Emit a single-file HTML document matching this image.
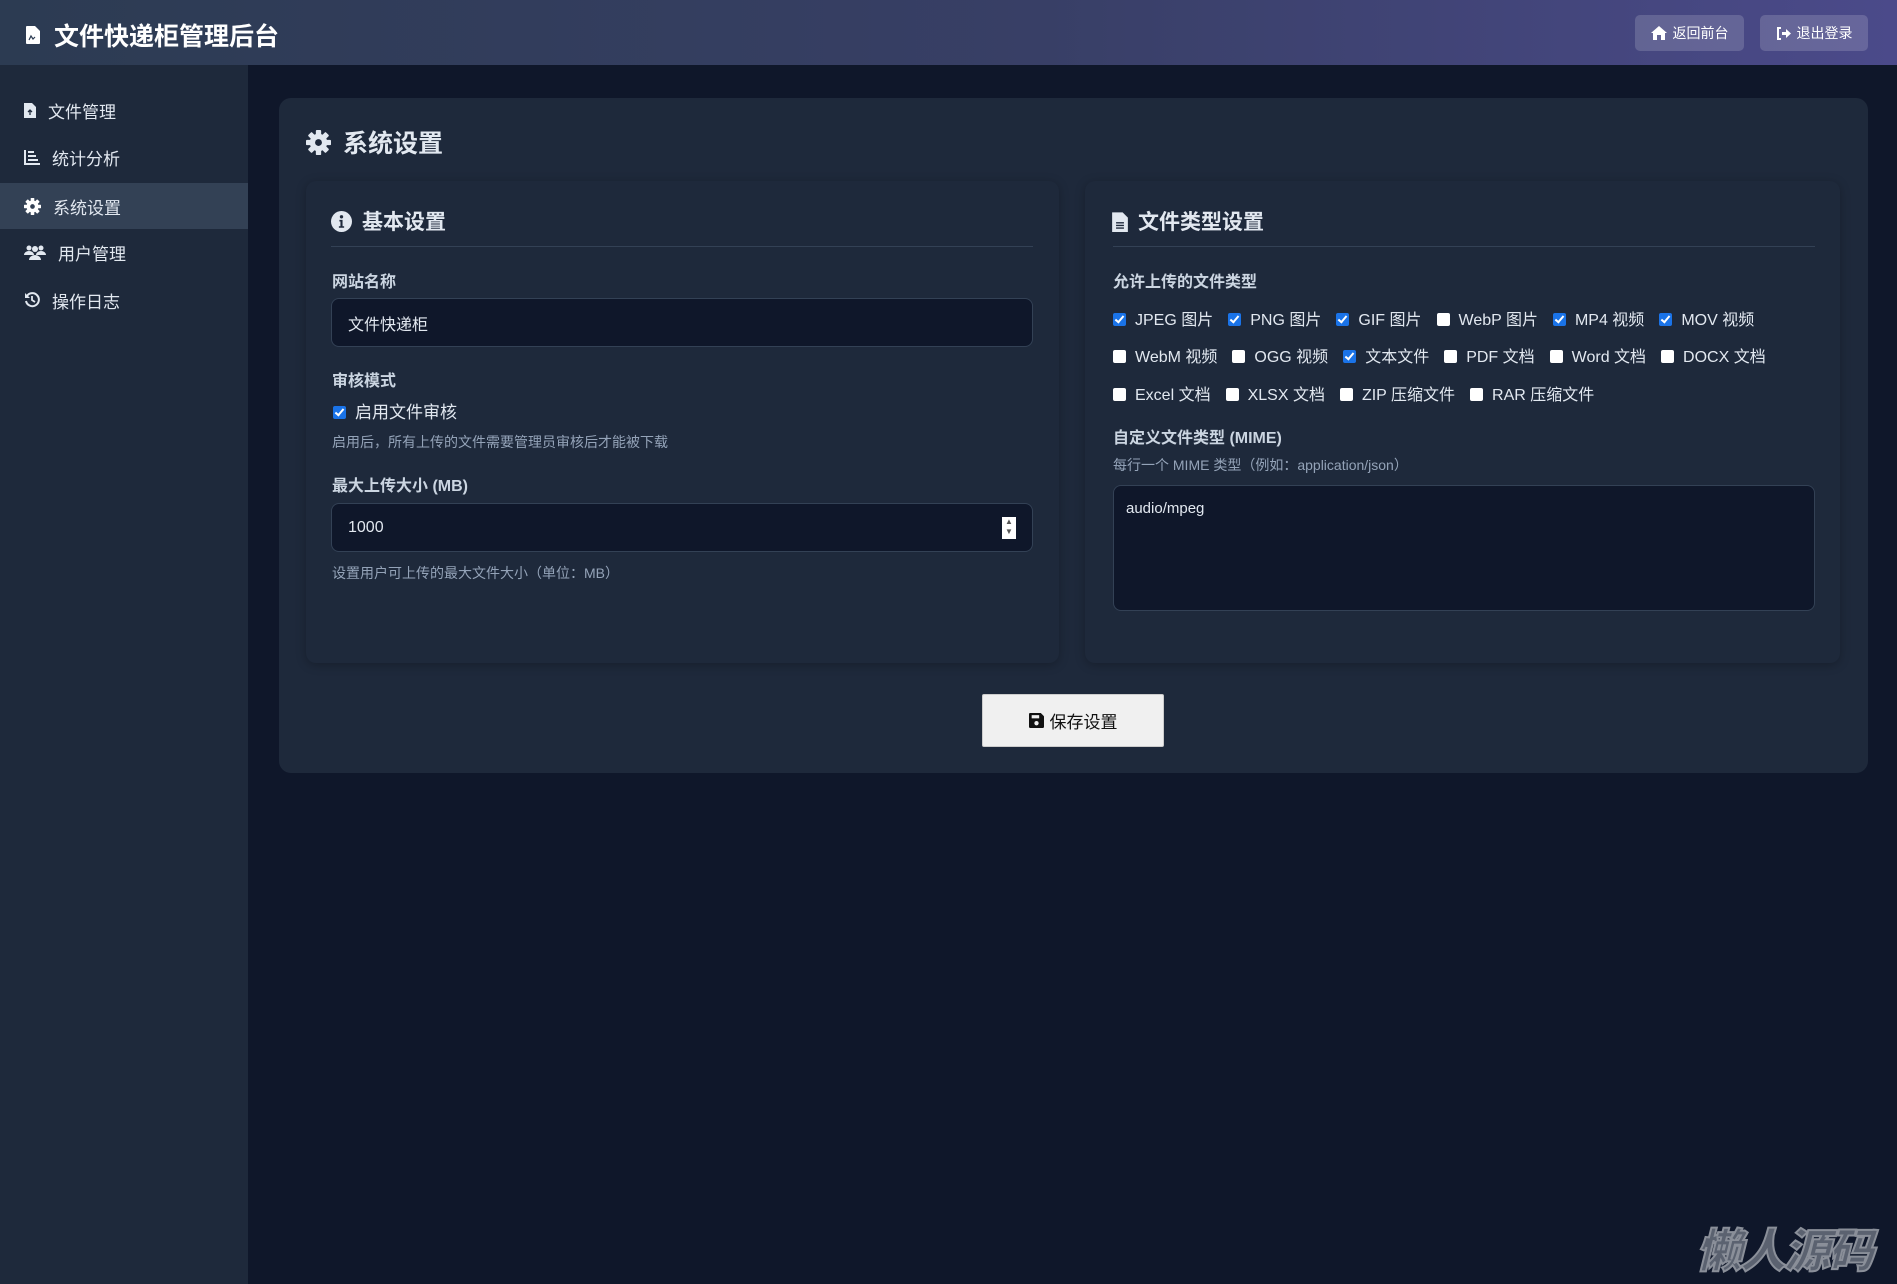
<!DOCTYPE html>
<html><head><meta charset="utf-8"><style>
*{box-sizing:border-box;margin:0;padding:0}
body{width:1897px;height:1284px;background:#0f172a;font-family:"Liberation Sans","Noto Sans CJK SC",sans-serif;color:#e2e8f0;position:relative;overflow:hidden}
.hdr{position:absolute;left:0;top:0;width:1897px;height:65px;background:linear-gradient(90deg,#2c3b52 0%,#383f66 55%,#4b4a8a 100%)}
.hdr h1{position:absolute;left:26px;top:17px;font-size:25px;font-weight:bold;color:#fff;display:flex;align-items:center;gap:14px}
.hb{position:absolute;top:15px;height:36px;background:rgba(255,255,255,.16);border-radius:5px;color:#fff;font-size:14px;display:flex;align-items:center;justify-content:center;gap:6px}
.side{position:absolute;left:0;top:65px;width:248px;height:1219px;background:#1e293b}
.it{position:absolute;left:0;width:248px;height:46px;display:flex;align-items:center;padding-left:24px;font-size:17px;color:#e2e8f0;gap:12px}
.it.act{background:#334155}
.card{position:absolute;left:279px;top:98px;width:1589px;height:675px;background:#1e293b;border-radius:12px}
.ttl{position:absolute;left:306px;top:124px;font-size:25px;font-weight:bold;display:flex;align-items:center;gap:12px;color:#e2e8f0}
.pn{position:absolute;top:181px;height:482px;background:#1e293b;border-radius:10px;box-shadow:0 2px 10px rgba(0,0,0,.25)}
.sub{position:absolute;font-size:21px;font-weight:bold;display:flex;align-items:center;gap:10px;color:#e2e8f0}
.hr{position:absolute;height:1px;background:#334155}
.lb{position:absolute;font-size:16px;font-weight:bold;color:#cbd5e1}
.in{position:absolute;background:#0f172a;border:1px solid #334155;border-radius:8px;font-size:16px;color:#e2e8f0;padding-left:16px;display:flex;align-items:center}
.hint{position:absolute;font-size:14px;color:#94a3b8}
.cb{display:inline-block;width:13px;height:13px;border-radius:2px;background:#fff;vertical-align:-1px;margin-right:9px;position:relative}
.cb.on{background:#1a73e8}
.cb.on::after{content:"";position:absolute;left:4px;top:1px;width:3px;height:7px;border:solid #fff;border-width:0 2px 2px 0;transform:rotate(40deg)}
.row{position:absolute;left:1113px;font-size:16px;color:#e2e8f0;white-space:nowrap}
.row span.g{margin-right:15px}
</style></head><body>
<svg width="0" height="0" style="position:absolute"><defs><g id="gear"><g fill="currentColor"><rect x="6.3" y="0" width="3.4" height="16" rx=".6"/><rect x="6.3" y="0" width="3.4" height="16" rx=".6" transform="rotate(45 8 8)"/><rect x="6.3" y="0" width="3.4" height="16" rx=".6" transform="rotate(90 8 8)"/><rect x="6.3" y="0" width="3.4" height="16" rx=".6" transform="rotate(135 8 8)"/><circle cx="8" cy="8" r="5.6"/></g><circle cx="8" cy="8" r="2.2" fill="var(--bg)"/></g></defs></svg>
<div class="hdr">
<h1><svg width="14" height="18" viewBox="0 0 14 18"><path d="M0 1a1 1 0 011-1h8l5 5v12a1 1 0 01-1 1H1a1 1 0 01-1-1z" fill="#fff"/><path d="M3 14l2-4 2 3 2-2" stroke="#2c3b52" stroke-width="1.2" fill="none"/></svg>文件快递柜管理后台</h1>
<div class="hb" style="left:1635px;width:109px"><svg width="16" height="14" viewBox="0 0 16 14"><path d="M8 0L0 7h2v7h4V9h4v5h4V7h2z" fill="#fff"/></svg>返回前台</div>
<div class="hb" style="left:1760px;width:108px"><svg width="15" height="13" viewBox="0 0 15 13"><path d="M5 1H2v11h3" stroke="#fff" stroke-width="2" fill="none"/><path d="M6 5h4V2l5 4.5-5 4.5V8H6z" fill="#fff"/></svg>退出登录</div>
</div>
<div class="side">
<div class="it" style="top:22px"><svg width="12" height="16" viewBox="0 0 12 16"><path d="M0 1h8l4 4v11H0z" fill="#e2e8f0"/><path d="M6 13V8M4 10l2-2 2 2" stroke="#1e293b" stroke-width="1.3" fill="none"/></svg>文件管理</div>
<div class="it" style="top:69px"><svg width="16" height="16" viewBox="0 0 16 16"><path d="M1 1v14h15" stroke="#e2e8f0" stroke-width="2" fill="none"/><path d="M4 3h6M4 7h8M4 11h10" stroke="#e2e8f0" stroke-width="2"/></svg>统计分析</div>
<div class="it act" style="top:118px"><svg width="17" height="17" viewBox="0 0 16 16" style="color:#fff;--bg:#334155"><use href="#gear"/></svg>系统设置</div>
<div class="it" style="top:164px"><svg width="22" height="16" viewBox="0 0 22 16"><circle cx="5" cy="4" r="2.5" fill="#e2e8f0"/><circle cx="17" cy="4" r="2.5" fill="#e2e8f0"/><circle cx="11" cy="5" r="3" fill="#e2e8f0"/><path d="M0 11a5 4 0 0110 0zM12 11a5 4 0 0110 0zM5 16a6 5 0 0112 0z" fill="#e2e8f0"/></svg>用户管理</div>
<div class="it" style="top:212px"><svg width="16" height="16" viewBox="0 0 16 16"><path d="M3 4a6.5 6.5 0 11-1 5" stroke="#e2e8f0" stroke-width="2" fill="none"/><path d="M1 1v5h5z" fill="#e2e8f0"/><path d="M8 4v4l3 2" stroke="#e2e8f0" stroke-width="1.8" fill="none"/></svg>操作日志</div>
</div>
<div class="card"></div>
<div class="ttl"><svg width="25" height="25" viewBox="0 0 16 16" style="color:#e2e8f0;--bg:#1e293b"><use href="#gear"/></svg>系统设置</div>
<div class="pn" style="left:306px;width:753px"></div>
<div class="pn" style="left:1085px;width:755px"></div>
<div class="sub" style="left:331px;top:206px"><svg width="21" height="21" viewBox="0 0 20 20"><circle cx="10" cy="10" r="10" fill="#e2e8f0"/><circle cx="10" cy="5.5" r="1.6" fill="#1e293b"/><path d="M8 8.5h3v6h1.5v1.5h-5v-1.5H9v-4.5H8z" fill="#1e293b"/></svg>基本设置</div>
<div class="hr" style="left:331px;top:246px;width:702px"></div>
<div class="lb" style="left:332px;top:268px">网站名称</div>
<div class="in" style="left:331px;top:298px;width:702px;height:49px">文件快递柜</div>
<div class="lb" style="left:332px;top:367px">审核模式</div>
<div style="position:absolute;left:333px;top:398px;font-size:17px"><span class="cb on"></span>启用文件审核</div>
<div class="hint" style="left:332px;top:432px">启用后，所有上传的文件需要管理员审核后才能被下载</div>
<div class="lb" style="left:332px;top:472px">最大上传大小 (MB)</div>
<div class="in" style="left:331px;top:503px;width:702px;height:49px">1000<div style="position:absolute;right:16px;top:13px;width:14px;height:22px;background:#fff;font-size:8px;color:#555;text-align:center;line-height:10px">▲<br>▼</div></div>
<div class="hint" style="left:332px;top:563px">设置用户可上传的最大文件大小（单位：MB）</div>
<div class="sub" style="left:1112px;top:206px"><svg width="16" height="21" viewBox="0 0 12 16"><path d="M0 1h8l4 4v11H0z" fill="#e2e8f0"/><path d="M3 9h6M3 11h6M3 13h6" stroke="#1e293b" stroke-width="1"/></svg>文件类型设置</div>
<div class="hr" style="left:1113px;top:246px;width:702px"></div>
<div class="lb" style="left:1113px;top:268px">允许上传的文件类型</div>
<div class="row" style="top:306px"><span class="cb on"></span><span class="g">JPEG 图片</span><span class="cb on"></span><span class="g">PNG 图片</span><span class="cb on"></span><span class="g">GIF 图片</span><span class="cb"></span><span class="g">WebP 图片</span><span class="cb on"></span><span class="g">MP4 视频</span><span class="cb on"></span><span class="g">MOV 视频</span></div>
<div class="row" style="top:343px"><span class="cb"></span><span class="g">WebM 视频</span><span class="cb"></span><span class="g">OGG 视频</span><span class="cb on"></span><span class="g">文本文件</span><span class="cb"></span><span class="g">PDF 文档</span><span class="cb"></span><span class="g">Word 文档</span><span class="cb"></span><span class="g">DOCX 文档</span></div>
<div class="row" style="top:381px"><span class="cb"></span><span class="g">Excel 文档</span><span class="cb"></span><span class="g">XLSX 文档</span><span class="cb"></span><span class="g">ZIP 压缩文件</span><span class="cb"></span><span class="g">RAR 压缩文件</span></div>
<div class="lb" style="left:1113px;top:424px">自定义文件类型 (MIME)</div>
<div class="hint" style="left:1113px;top:455px">每行一个 MIME 类型（例如：application/json）</div>
<div class="in" style="left:1113px;top:485px;width:702px;height:126px;align-items:flex-start;padding:14px 12px;font-size:15px">audio/mpeg</div>
<div style="position:absolute;left:982px;top:694px;width:182px;height:53px;background:#f0f0f0;border:1px solid #ccc;border-radius:2px;color:#111;font-size:17px;display:flex;align-items:center;justify-content:center;gap:6px"><svg width="15" height="15" viewBox="0 0 14 14"><path d="M0 1a1 1 0 011-1h10l3 3v10a1 1 0 01-1 1H1a1 1 0 01-1-1z" fill="#111"/><rect x="2.5" y="2" width="7" height="3" fill="#f0f0f0"/><circle cx="7" cy="9.5" r="2" fill="#f0f0f0"/></svg>保存设置</div>
<div style="position:absolute;left:1696px;top:1220px;font-size:46px;font-weight:900;font-style:italic;color:#5b6270;-webkit-text-stroke:2px #8a8f99;letter-spacing:-2px;font-family:'Noto Sans CJK SC',sans-serif;line-height:56px">懒人源码</div>
</body></html>
